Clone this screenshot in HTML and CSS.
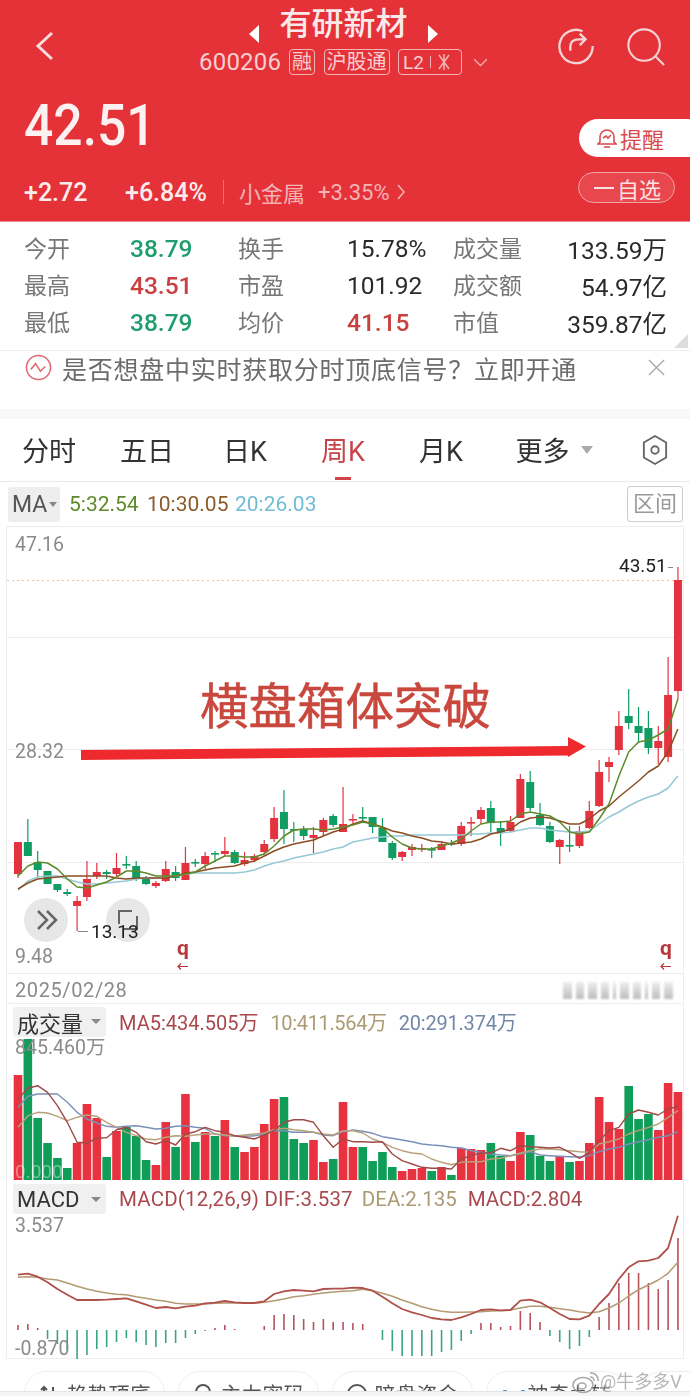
FILE: index.html
```html
<!DOCTYPE html>
<html lang="zh">
<head>
<meta charset="utf-8">
<title>有研新材</title>
<link rel="stylesheet" href="styles.css">
</head>
<body>
<div class="page">
  <header class="hero">
    <div class="topbar">
      <svg class="back" viewBox="0 0 20 30"><path d="M17 2 3 15l14 13"/></svg>
      <div class="identity">
        <div class="title-row"><i class="tri-left"></i><h1>有研新材</h1><i class="tri-right"></i></div>
        <div class="code-row">
          <span class="code">600206</span>
          <span class="tag">融</span>
          <span class="tag">沪股通</span>
          <span class="tag tag-l2">L2<i class="tag-sep"></i><svg viewBox="0 0 14 18"><path d="M2 2l10 14M12 2 2 16M7 1v16"/></svg></span>
          <svg class="chev" viewBox="0 0 16 10"><path d="M1 1.500l7 7 7-7"/></svg>
        </div>
      </div>
      <div class="actions">
        <svg class="act-share" viewBox="0 0 40 40"><path d="M27 4.500A17.500 17.500 0 1 0 37.500 20"/><path d="M14 25v-4c0-5 3-8 9-8h5M24 7l6 6-6 6"/></svg>
        <svg class="act-search" viewBox="0 0 42 42"><circle cx="19" cy="19" r="16.500"/><path d="M31 31l9 9"/></svg>
      </div>
    </div>
    <div class="quote-main">
      <div class="price-col">
        <div class="price">42.51</div>
        <div class="change-row">
          <span class="chg chg-a">+2.72</span>
          <span class="chg chg-b">+6.84%</span>
          <i class="divider"></i>
          <span class="sector">小金属</span>
          <span class="sector-pct">+3.35%</span>
          <svg class="sector-arrow" viewBox="0 0 10 18"><path d="M2 2l6 7-6 7"/></svg>
        </div>
      </div>
      <div class="btn-col">
        <div class="btn-alert">
          <svg viewBox="0 0 20 22"><path d="M3 15V10a7 7 0 0 1 14 0v5l2 2H1zM7 20h6M6 11l3-2 2 2 3-3"/></svg>
          <span>提醒</span>
        </div>
        <div class="btn-watch"><i></i><span>自选</span></div>
      </div>
    </div>
  </header>

  <section class="stats">
    <span class="lab">今开</span><span class="val down">38.79</span><span class="lab">换手</span><span class="val">15.78%</span><span class="lab">成交量</span><span class="val end">133.59万</span>
    <span class="lab">最高</span><span class="val up">43.51</span><span class="lab">市盈</span><span class="val">101.92</span><span class="lab">成交额</span><span class="val end">54.97亿</span>
    <span class="lab">最低</span><span class="val down">38.79</span><span class="lab">均价</span><span class="val up">41.15</span><span class="lab">市值</span><span class="val end">359.87亿</span>
  </section>

  <section class="notice">
    <svg class="notice-icon" viewBox="0 0 28 28"><circle cx="14" cy="14" r="12.500"/><path d="M6 16l5-6 5 8 5-5"/></svg>
    <span class="notice-text">是否想盘中实时获取分时顶底信号？立即开通</span>
    <svg class="notice-close" viewBox="0 0 18 18"><path d="M1 1l16 16M17 1 1 17"/></svg>
  </section>

  <nav class="tabs">
    <span class="tab">分时</span>
    <span class="tab">五日</span>
    <span class="tab">日K</span>
    <span class="tab tab-on">周K</span>
    <span class="tab">月K</span>
    <span class="tab tab-more">更多<i class="tab-caret"></i></span>
    <svg class="tab-hex" viewBox="0 0 28 34"><path d="M14 2 26 9v16l-12 7-12-7V9z"/><circle cx="14" cy="17" r="4"/></svg>
  </nav>

  <div class="ma-row">
    <span class="chip-ma">MA<i></i></span>
    <span class="ma5">5:32.54</span>
    <span class="ma10">10:30.05</span>
    <span class="ma20">20:26.03</span>
    <span class="range-btn">区间</span>
  </div>

  <div class="frame">
    <svg class="chart-main" viewBox="7 527 676 448">
      <g class="grid">
        <path d="M7 527.500H683M7 638.500H683M7 750.500H683M7 863.500H683M7 974.500H683"/>
      </g>
      <path class="dash" d="M7 581.500H683"/>
      <g id="candles"></g>
      <polygon class="arrow" points="81,751 568,747 568,738 586,747.500 568,758 568,756.500 81,761"/>
      <circle class="round" cx="46" cy="921" r="22"/>
      <circle class="round" cx="128" cy="921" r="22"/>
      <path class="round-ico" d="M38 912l9 9-9 9M47 912l9 9-9 9"/>
      <path class="round-ico thin" d="M119 925v-13h13M137 917v13h-13"/>
      <path class="tick" d="M78 932.500H88M668 568.500H673"/>
      <text class="axis" x="15" y="552">47.16</text>
      <text class="axis" x="15" y="759">28.32</text>
      <text class="axis" x="15" y="964">9.48</text>
      <text class="mark" x="91" y="939">13.13</text>
      <text class="mark" x="619" y="573">43.51</text>
      <text class="note" x="200" y="725">横盘箱体突破</text>
      <text class="q" x="177" y="956">q</text>
      <text class="q" x="660" y="956">q</text>
      <path class="q-arrow" d="M188 967.500H178M181 964.500l-3 3 3 3M671 967.500H661M664 964.500l-3 3 3 3"/>
    </svg>

    <div class="date-row">
      <span class="date">2025/02/28</span>
      <div class="smudges"><i></i><i></i><i></i><i></i><i class="slim"></i><i></i><i></i><i class="slim"></i><i></i><i></i></div>
    </div>

    <div class="panel-head head-vol">
      <span class="chip">成交量<i></i></span>
      <span class="l-red">MA5:434.505万</span>
      <span class="l-tan">10:411.564万</span>
      <span class="l-blue">20:291.374万</span>
    </div>
    <svg class="chart-vol" viewBox="7 1040 676 144">
      <g id="vol"></g>
      <text class="axis" x="15" y="1055">845.460万</text>
      <text class="axis-faint" x="15" y="1179">0.000</text>
    </svg>

    <div class="panel-head head-macd">
      <span class="chip">MACD<i></i></span>
      <span class="l-red l-dif">MACD(12,26,9) DIF:3.537</span>
      <span class="l-tan">DEA:2.135</span>
      <span class="l-red">MACD:2.804</span>
    </div>
    <svg class="chart-macd" viewBox="7 1216 676 144">
      <g id="macd"></g>
      <text class="axis" x="15" y="1233">3.537</text>
      <text class="axis" x="15" y="1356">-0.870</text>
    </svg>
  </div>

  <div class="pills">
    <span class="pill"><svg viewBox="0 0 20 20"><path d="M5 18V4M2 7l3-3 3 3M14 4v14M11 15l3 3 3-3"/></svg>趋势顶底</span>
    <span class="pill"><svg viewBox="0 0 20 20"><circle cx="10" cy="9" r="7"/></svg>主力密码</span>
    <span class="pill"><svg viewBox="0 0 20 20"><circle cx="10" cy="11" r="9"/><path d="M6 9h8"/></svg>暗盘资金</span>
    <span class="pill"><i class="dots"></i>神奇九转</span>
    <span class="pill pill-last"><svg viewBox="0 0 24 20"><path class="arc" d="M2 18A10 10 0 0 1 22 18"/></svg></span>
  </div>
  <div class="foot"></div>

  <div class="watermark">
    <svg viewBox="0 0 28 26"><ellipse cx="11" cy="17" rx="10" ry="7.500"/><ellipse cx="10" cy="18" rx="4" ry="3"/><path d="M18 5a7 7 0 0 1 8 8M18 9a3.500 3.500 0 0 1 4 4"/></svg>
    <span>@牛多多V</span>
  </div>
</div>
<script src="script.js"></script>
</body>
</html>
```

FILE: styles.css
```css
* { box-sizing: border-box; }
html, body { margin: 0; padding: 0; background: #fff; }
body { font-family: Roboto, "Noto Sans CJK SC", sans-serif; color: #2b2b2b; }
i { display: block; font-style: normal; }
svg { display: block; fill: none; }

.page { position: relative; width: 690px; height: 1398px; overflow: hidden; filter: blur(.3px); }

/* header */
.hero { height: 222px; background: #e53239; color: #fff; border-bottom: 1px solid #ee8a8d; }
.topbar { display: grid; grid-template-columns: 199px 289px 1fr; height: 90px; }
.back { width: 20px; height: 30px; margin: 31px 0 0 35px; stroke: #f8dcdc; stroke-width: 3; }
.identity { display: flex; flex-direction: column; align-items: center; padding-top: 3px; }
.title-row { display: flex; align-items: center; gap: 20px; height: 42px; }
.title-row h1 { margin: 0; font-size: 32px; font-weight: 500; line-height: 42px; color: #f9e9e9; }
.tri-left { width: 0; height: 0; border: 9px solid transparent; border-left: 0; border-right: 10px solid #fff; margin-top: 20px; }
.tri-right { width: 0; height: 0; border: 9px solid transparent; border-right: 0; border-left: 10px solid #fff; margin-top: 20px; }
.code-row { display: flex; align-items: center; height: 28px; margin-top: 3px; color: #f7cfd0; align-self: flex-start; white-space: nowrap; }
.code { font-size: 24px; width: 90px; letter-spacing: .2px; }
.tag { flex: none; display: flex; align-items: center; height: 26px; padding: 0 2px; margin-right: 8.500px; border: 1px solid #f3b4b6; border-radius: 4px; font-size: 20px; line-height: 1; }
.tag-l2 { width: 64px; padding: 0 4px; font-size: 19px; gap: 6px; margin-right: 11px; }
.tag-sep { width: 1px; height: 12px; background: #f3b4b6; }
.tag-l2 svg { width: 14px; height: 18px; stroke: #f3b4b6; stroke-width: 1.5; }
.chev { width: 15px; height: 9px; stroke: #f3b4b6; stroke-width: 1.500; }
.actions { display: flex; padding: 27px 0 0 69px; gap: 31px; align-items: flex-start; }
.act-share { width: 38px; height: 38px; stroke: #f6d3d4; stroke-width: 2.500; }
.act-search { width: 40px; height: 40px; stroke: #f6d3d4; stroke-width: 2.200; }

.quote-main { display: flex; justify-content: space-between; height: 131px; }
.price-col { padding-left: 24px; }
.price { font-size: 58px; font-weight: 500; line-height: 60px; margin-top: 5px; transform: scaleX(.89); transform-origin: left center; color: #fbf1f1; }
.change-row { display: flex; align-items: center; height: 30px; margin-top: 22px; font-size: 25px; }
.chg { color: #fbecec; font-weight: 500; }
.chg-a { width: 101px; }
.chg-b { width: 98px; }
.divider { width: 1px; height: 24px; background: #ec6f72; margin-right: 15px; }
.sector { color: #f4b3b5; font-size: 22px; width: 79px; }
.sector-pct { color: #f4b3b5; font-size: 22px; width: 78px; }
.sector-arrow { width: 10px; height: 18px; stroke: #f4b3b5; stroke-width: 1.500; }
.btn-col { display: flex; flex-direction: column; align-items: flex-end; padding-top: 29px; }
.btn-alert { display: flex; align-items: center; gap: 3px; width: 111px; height: 38px; padding-left: 18px; background: #fff; border-radius: 19px 0 0 19px; color: #d84a4e; font-size: 22px; }
.btn-alert svg { width: 20px; height: 22px; stroke: #d84a4e; stroke-width: 1.600; }
.btn-watch { display: flex; align-items: center; gap: 3px; width: 97px; height: 31px; margin: 15px 15px 0 0; padding-left: 15px; border: 1px solid #f2a3a5; border-radius: 16px; background: #e8474d; color: #fbe1e1; font-size: 22px; }
.btn-watch i { width: 20px; height: 2px; background: #fbe1e1; }

/* stats */
.stats { position: relative; display: grid; grid-template-columns: 106px 108px 109px 106px 75px 1fr; grid-auto-rows: 37px; align-items: center; height: 129px; padding: 8px 23px 0 24px; font-size: 24.500px; border-bottom: 1px solid #eee; }
.stats::after { content: ""; position: absolute; right: 2px; bottom: 2px; border: 7px solid transparent; border-right-color: #ddd; border-bottom-color: #ddd; }
.lab { color: #777; font-size: 23px; margin-top: -4px; }
.val { color: #2a2a2a; white-space: nowrap; }
.end { justify-self: end; }
.up { color: #c8403f; font-weight: 500; }
.down { color: #1f9d6e; font-weight: 500; }

/* notice */
.notice { display: flex; align-items: center; height: 38px; padding: 0 0 5px 25px; font-size: 25px; color: #6c6c6c; margin-bottom: 20px; }
.notice-icon { width: 27px; height: 27px; stroke: #dd6a70; stroke-width: 1.600; margin-right: 10px; }
.notice-text { width: 586px; letter-spacing: .75px; white-space: nowrap; }
.notice-close { width: 17px; height: 17px; stroke: #aaa; stroke-width: 1.500; }

/* tabs */
.tabs { display: flex; align-items: center; background: #fff; border-top: 10px solid #f8f8f8; border-bottom: 1px solid #eaeaea; height: 73px; font-size: 27px; color: #333; }
.tab { position: relative; display: flex; align-items: center; justify-content: center; width: 98px; height: 62px; padding-bottom: 2px; }
.tab-on { color: #c9434a; }
.tab-on::after { content: ""; position: absolute; left: 41px; bottom: 1px; width: 16px; height: 3px; background: #d2434b; }
.tab-more { padding-left: 7px; }
.tab-caret { position: absolute; left: 91px; top: 27px; width: 0; height: 0; border: 6.500px solid transparent; border-top: 8px solid #aaa; border-bottom: 0; }
.tab-hex { width: 26px; height: 32px; margin-left: 54px; stroke: #666; stroke-width: 2; }

/* MA row */
.ma-row { display: flex; align-items: center; height: 44px; padding: 0 8px; font-size: 21px; }
.chip-ma { display: flex; align-items: center; gap: 2px; width: 52px; height: 35px; padding-left: 4px; margin-right: 9px; background: #eee; color: #555; border-radius: 3px; font-size: 23px; }
.chip-ma i { width: 0; height: 0; border: 4px solid transparent; border-top: 5px solid #888; border-bottom: 0; }
.ma5 { color: #5e8a2b; width: 78px; }
.ma10 { color: #8d5a2b; width: 88px; }
.ma20 { color: #71bcd6; }
.range-btn { margin-left: auto; width: 56px; height: 36px; line-height: 34px; text-align: center; font-size: 22px; color: #999; border: 1px solid #ccc; border-radius: 3px; margin-right: -1px; }

/* charts */
.frame { margin: 0 6px; width: 678px; height: 833px; border: 1px solid #eee; border-top: 0; }
.chart-main { width: 676px; height: 448px; }
.grid path { stroke: #ececec; }
.dash { stroke: #e6c7a0; stroke-dasharray: 2 3; }
.arrow { fill: #ee2a2e; }
.round { fill: #e6e6e6; fill-opacity: .95; }
.round-ico { stroke: #666; stroke-width: 2.500; }
.round-ico.thin { stroke-width: 2; }
.tick { stroke: #888; }
.axis { font-size: 19.500px; fill: #8b8b8b; }
.axis-faint { font-size: 19px; fill: #fff; fill-opacity: .4; }
.mark { font-size: 19px; fill: #1d1d1d; }
.note { font-size: 48.500px; fill: #c9483e; stroke: #c9483e; stroke-width: .5px; font-family: "Noto Sans CJK SC", sans-serif; }
.q { font-size: 21px; font-weight: 700; fill: #b8363c; }
.q-arrow { stroke: #b8363c; stroke-width: 1.200; }

.date-row { display: flex; align-items: center; justify-content: space-between; height: 29px; padding: 3px 10px 0 8px; font-size: 20px; color: #8b8b8b; letter-spacing: .6px; }
.smudges { display: flex; gap: 4px; width: 110px; height: 17px; }
.smudges i { flex: 1; background: linear-gradient(#eee, #bdbdbd); filter: blur(1px); }
.smudges .slim { flex: .3; }

.panel-head { display: flex; align-items: center; padding-left: 6px; border-top: 1px solid #eee; white-space: nowrap; }
.head-vol { height: 36px; font-size: 20px; }
.head-vol .l-red { margin-right: 12px; }
.head-vol .l-tan { margin-right: 12px; letter-spacing: -.35px; }
.head-macd { height: 32px; border-top: 0; font-size: 20.500px; }
.chip { display: flex; align-items: center; justify-content: space-between; width: 93px; height: 30px; padding: 0 5px 0 4px; margin-right: 13px; background: #f0f0f0; color: #333; border-radius: 3px; font-size: 22px; }
.chip i { width: 0; height: 0; border: 5px solid transparent; border-top: 5px solid #888; border-bottom: 0; }
.l-red { color: #a9494d; margin-right: 9px; }
.l-dif { letter-spacing: .17px; }
.l-tan { color: #ab9a74; margin-right: 11px; }
.l-blue { color: #7288a8; letter-spacing: -.2px; }
.chart-vol, .chart-macd { width: 676px; height: 144px; }

/* shortcuts */
.pills { display: flex; gap: 13px; height: 32px; padding: 12px 0 0 24px; overflow: hidden; }
.pill { flex: none; display: flex; align-items: center; justify-content: center; gap: 8px; width: 141px; height: 44px; border: 1px solid #eee; border-radius: 22px; font-size: 21px; color: #555; }
.pill svg { width: 20px; height: 20px; stroke: #555; stroke-width: 2; }
.pill-last svg { width: 24px; }
.pill-last .arc { stroke: #3f7fb8; }
.dots { width: 6px; height: 6px; margin-right: 12px; border-radius: 50%; background: #3f7fb8; box-shadow: 18px 0 0 #3f7fb8; }
.foot { height: 5px; background: #f5f5f5; border-top: 1px solid #e6e6e6; }

.watermark { position: absolute; left: 572px; top: 1368px; display: flex; align-items: center; gap: 0; color: #aaa; font-size: 18px; opacity: .85; text-shadow: 0 0 2px #fff; white-space: nowrap; }
.watermark svg { width: 28px; height: 26px; stroke: #999; stroke-width: 1.500; }
.watermark span { margin-top: -2px; }
```

FILE: script.js
```js
var NS = 'http://www.w3.org/2000/svg';
var X0 = 18, STEP = 9.85;
function xAt(i) { return X0 + STEP * i; }
function add(parent, tag, attrs) {
  var el = document.createElementNS(NS, tag);
  for (var k in attrs) el.setAttribute(k, attrs[k]);
  parent.appendChild(el);
  return el;
}
function line(parent, ys, color, width) {
  var pts = ys.map(function (y, i) { return xAt(i).toFixed(1) + ',' + y; }).join(' ');
  add(parent, 'polyline', { points: pts, fill: 'none', stroke: color, 'stroke-width': width, 'stroke-linejoin': 'round' });
}
var RED = '#e5323f', GREEN = '#0f9d63';

/* body top, body bottom, wick top, wick bottom, colour */
var candles = [
[843,875,843,879,'r'],[843,857,820,857,'g'],[863,871,852,878,'g'],[872,885,872,885,'g'],[885,891,885,893,'g'],[893,895,890,897,'g'],[902,907,897,932,'r'],[880,898,862,902,'r'],[873,877,864,880,'r'],[873,875,871,880,'g'],
[869,875,854,877,'r'],[865,866,857,870,'g'],[867,880,862,882,'g'],[880,885,877,886,'g'],[884,887,882,889,'r'],[870,882,862,883,'r'],[873,879,867,882,'g'],[864,881,848,881,'r'],[863,864,860,868,'g'],[857,865,853,870,'r'],
[854,855,852,863,'g'],[852,855,838,857,'r'],[853,864,851,865,'g'],[861,865,853,867,'r'],[857,861,855,863,'r'],[845,853,841,855,'r'],[819,840,808,843,'r'],[813,830,791,845,'g'],[830,831,823,843,'g'],[830,837,827,841,'g'],
[836,839,828,854,'r'],[821,833,819,837,'r'],[817,826,815,828,'g'],[825,833,788,833,'r'],[820,821,815,824,'r'],[818,819,808,822,'g'],[818,828,818,834,'g'],[829,843,819,843,'g'],[844,859,842,861,'g'],[853,858,852,862,'r'],
[848,851,845,857,'r'],[849,850,845,853,'r'],[850,851,848,859,'g'],[845,851,843,851,'r'],[844,845,841,847,'g'],[827,845,823,847,'r'],[823,824,818,837,'r'],[811,820,808,825,'r'],[809,824,802,833,'g'],[829,834,822,847,'g'],
[823,832,817,833,'r'],[780,819,775,819,'r'],[783,809,772,812,'g'],[816,826,804,827,'g'],[827,843,823,844,'g'],[841,848,840,865,'r'],[846,847,827,853,'g'],[832,847,827,849,'r'],[812,829,802,830,'r'],[773,807,761,808,'r'],
[763,768,758,783,'r'],[727,751,712,756,'r'],[717,724,690,730,'g'],[727,734,708,743,'g'],[729,749,712,755,'g'],[742,749,727,765,'r'],[696,758,658,763,'r'],[581,692,568,700,'r']
];
var ma5 = [877,867,863,864,870,880,888,889,886,883,878,872,872,874,877,877,877,875,873,867,862,857,857,858,858,855,847,837,831,830,830,831,830,828,826,823,825,829,838,845,849,850,850,847,844,840,832,825,823,823,822,815,813,815,817,823,833,835,833,820,805,777,753,743,741,736,730,700];
var ma10 = [890,884,880,879,878,877,877,877,877,877,879,880,879,879,879,879,877,874,873,871,869,868,867,864,862,857,852,848,845,843,841,837,833,830,825,822,825,828,832,834,837,839,842,843,845,844,843,840,835,833,830,823,819,818,819,822,825,825,820,812,807,798,790,782,773,767,753,730];
var ma20 = [891,882,878,877,877,880,883,885,885,884,883,882,880,879,879,878,877,875,874,874,874,874,874,873,871,867,864,862,859,857,855,853,850,848,843,841,839,838,837,837,836,836,836,836,836,836,835,835,834,834,833,831,829,829,831,832,833,833,832,825,818,813,807,802,798,795,789,777];

var gc = document.getElementById('candles');
candles.forEach(function (c, i) {
  var col = c[4] === 'r' ? RED : GREEN, x = xAt(i);
  add(gc, 'line', { x1: x, x2: x, y1: c[2], y2: c[3], stroke: col, 'stroke-width': 1.2 });
  var h = Math.max(c[1] - c[0], 1.6);
  add(gc, 'rect', { x: x - 4, y: c[0], width: 8, height: h, fill: col });
});
line(gc, ma20, '#96c8d6', 1.5);
line(gc, ma10, '#8a4e22', 1.5);
line(gc, ma5, '#5f8a2a', 1.5);

/* volume: bar tops, baseline 1181 */
var vols = [1076,1039,1119,1144,1159,1169,1144,1105,1119,1158,1132,1128,1137,1161,1166,1123,1148,1095,1143,1133,1137,1121,1148,1153,1148,1125,1100,1098,1140,1144,1141,1163,1160,1103,1148,1148,1162,1153,1168,1172,1170,1169,1172,1168,1176,1149,1150,1151,1144,1157,1162,1133,1136,1157,1162,1157,1163,1162,1144,1098,1123,1130,1087,1120,1115,1131,1084,1093];
var vCol = 'r g g g g g r r r g r g g g r r g r g r g r g r r r r g g g r r g r r g g g g r r r g r g r r r g g r r g g g r g r r r r r g g g r r r'.split(' ');
var gv = document.getElementById('vol');
vols.forEach(function (t, i) {
  add(gv, 'rect', { x: xAt(i) - 4.3, y: t, width: 8.6, height: 1181 - t, fill: vCol[i] === 'r' ? '#e8323f' : '#0f9d58' });
});
function z(arr, base) { return arr.map(function (v) { return +(base + v / 3).toFixed(1); }); }
var vm5 = z([300,268,260,280,320,370,430,432,418,416,392,385,400,428,435,425,438,405,398,385,395,400,410,415,420,408,395,370,362,362,370,410,445,420,428,428,430,428,465,485,495,505,508,508,510,480,470,462,462,448,455,440,443,445,447,445,460,478,460,425,395,385,345,333,340,348,330,322], 1000);
var vm10 = z([385,350,340,342,352,365,355,348,352,370,385,400,410,420,422,415,410,412,408,405,405,408,412,408,405,402,392,388,392,395,400,405,408,395,395,402,420,430,445,455,462,465,480,490,497,490,488,488,480,478,470,462,455,450,450,452,455,458,460,435,428,420,405,395,385,375,355,335], 1000);
var vm20 = z([325,292,285,285,285,310,340,360,372,382,385,382,380,385,390,388,382,380,385,388,405,410,410,412,410,405,395,395,400,400,400,408,410,398,393,397,403,413,418,423,428,435,438,440,445,447,455,460,465,468,470,465,458,468,470,472,473,474,470,458,450,445,435,428,422,415,410,398], 1000);
line(gv, vm20, '#7a8fb8', 1.4);
line(gv, vm10, '#b8a078', 1.4);
line(gv, vm5, '#a04a48', 1.4);

/* MACD histogram: pixels above (+) or below (-) the zero line */
var hist = [5,6,2,-9,-14,-21,-29,-25,-19,-17,-12,-8,-12,-15,-17,-13,-13,-8,-4,-1,2,5,1,0,0,4,15,16,15,11,8,11,8,8,7,6,0,-10,-21,-26,-26,-26,-26,-22,-20,-11,-4,7,7,3,4,19,17,8,-6,-12,-19,-16,-7,13,27,47,57,57,47,41,50,92];
var gm = document.getElementById('macd');
hist.forEach(function (h, i) {
  if (!h) return;
  add(gm, 'line', { x1: xAt(i), x2: xAt(i), y1: 1331, y2: 1331 - h, stroke: h > 0 ? '#b5525c' : '#3aa57c', 'stroke-width': 1.6 });
});
var dif = z([272,269,278,295,315,332,348,348,348,347,345,343,352,362,372,369,373,368,365,358,356,351,355,357,357,352,330,322,318,320,322,315,314,314,311,312,320,338,358,375,385,393,402,406,408,400,390,378,376,379,378,350,347,355,372,390,405,406,395,360,330,285,250,232,230,222,192,95], 1185);
var dea = z([280,278,280,285,288,297,307,315,322,327,331,332,338,343,348,352,358,360,360,360,358,357,356,357,357,355,350,345,338,335,331,327,324,322,320,316,320,328,337,348,358,368,376,382,385,385,384,383,381,380,378,372,367,367,370,374,378,383,387,383,372,357,336,317,303,288,268,235], 1185);
line(gm, dea, '#b39a72', 1.5);
line(gm, dif, '#b0504a', 1.8);
```
